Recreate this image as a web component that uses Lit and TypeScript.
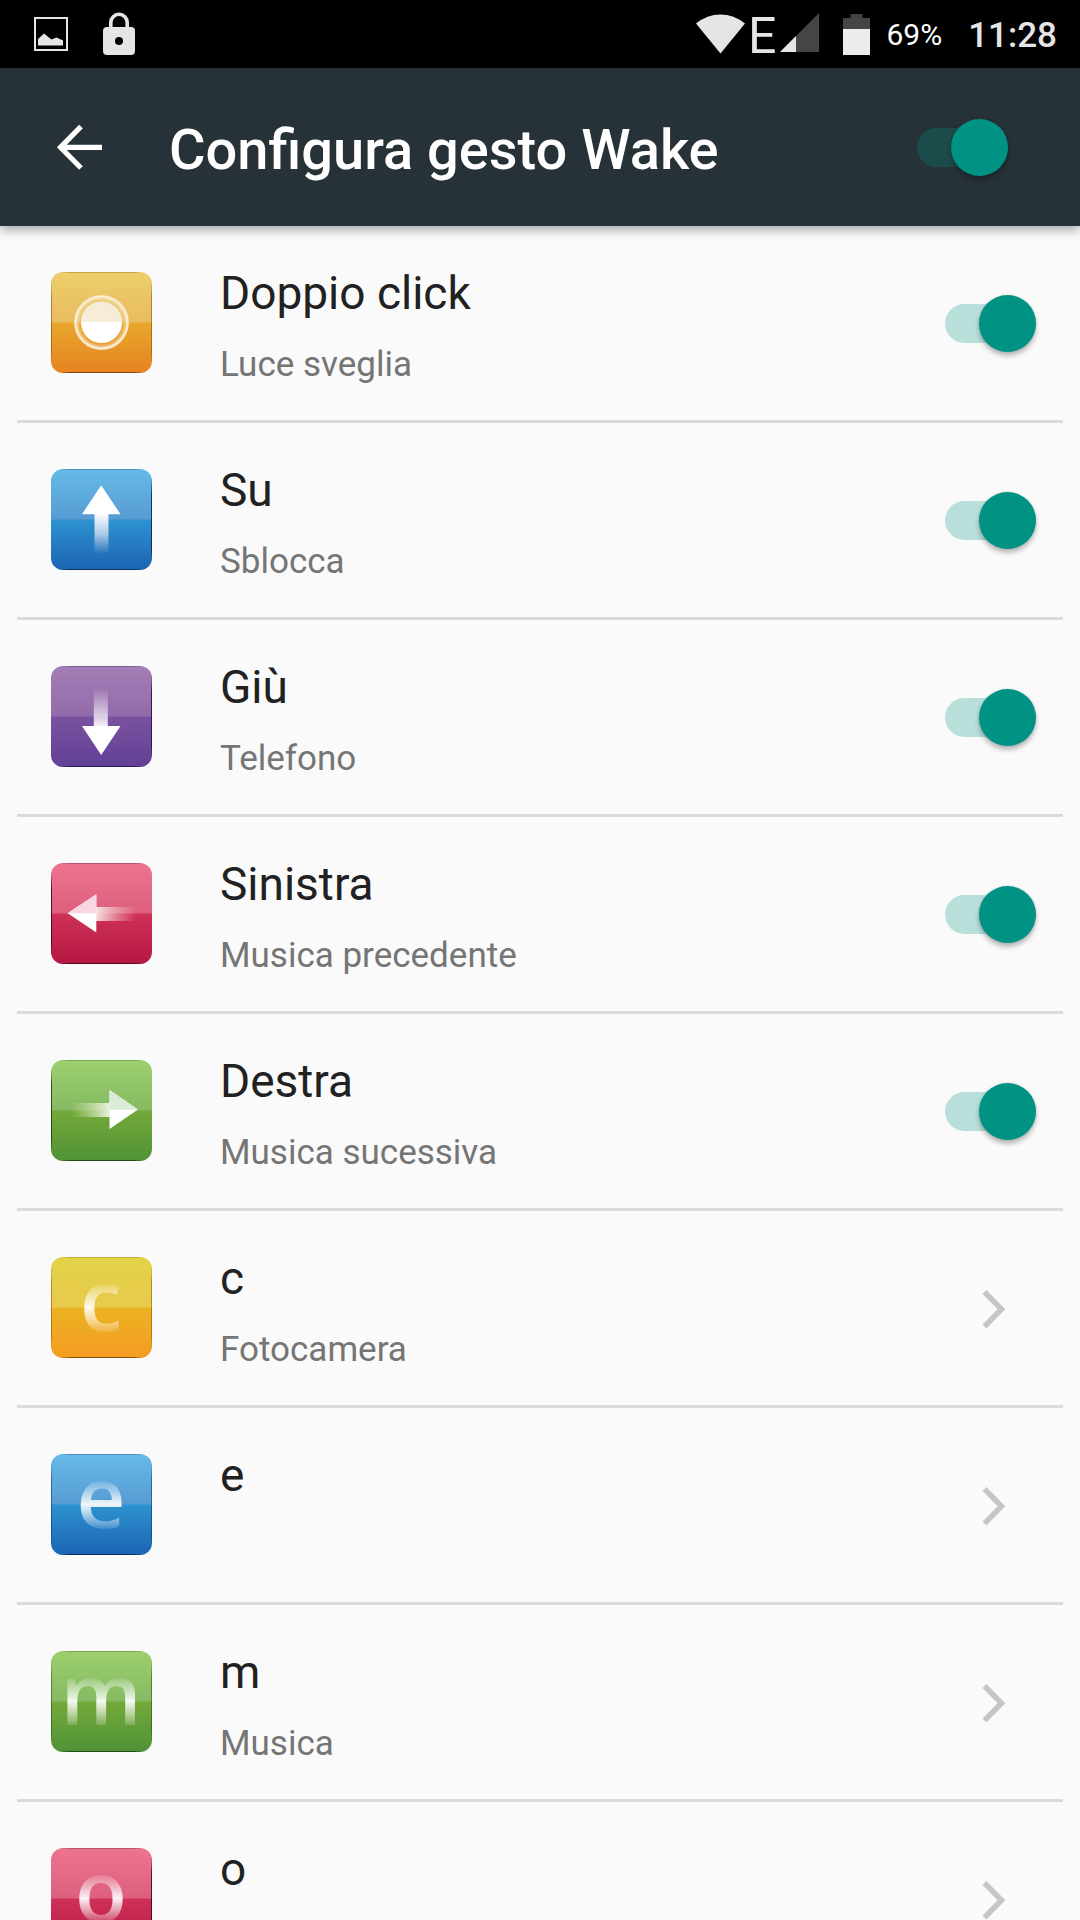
import { LitElement, html, svg, css, nothing } from "lit";
import { customElement, property } from "lit/decorators.js";

type Tone = "orange" | "blue" | "purple" | "red" | "green" | "yellow";

interface Gesture {
  id: string;
  title: string;
  action: string;
  tone: Tone;
  symbol: string;
  kind: "toggle" | "link";
  edge: "left" | "right" | "both";
}

/* upper start, upper end, lower start, lower end, edge line */
const TONES: Record<Tone, string[]> = {
  orange: ["#eccf6a", "#e9bb5f", "#e8a72d", "#e68320", "#6b3f08"],
  blue: ["#66bae8", "#569bd3", "#2e93d0", "#1b63b2", "#08284c"],
  purple: ["#a37eb6", "#926aa9", "#7952a0", "#614096", "#25124a"],
  red: ["#ed748f", "#dc607e", "#cf3157", "#b31743", "#4a0519"],
  green: ["#9dcf6e", "#85ba62", "#74a93a", "#4f9236", "#1d4212"],
  yellow: ["#e2d348", "#e9c94b", "#ebb323", "#f49c22", "#7a4806"],
};

const GESTURES: Gesture[] = [
  { id: "double", title: "Doppio click", action: "Luce sveglia", tone: "orange", symbol: "tap", kind: "toggle", edge: "both" },
  { id: "up", title: "Su", action: "Sblocca", tone: "blue", symbol: "up", kind: "toggle", edge: "right" },
  { id: "down", title: "Giù", action: "Telefono", tone: "purple", symbol: "down", kind: "toggle", edge: "right" },
  { id: "left", title: "Sinistra", action: "Musica precedente", tone: "red", symbol: "left", kind: "toggle", edge: "left" },
  { id: "right", title: "Destra", action: "Musica sucessiva", tone: "green", symbol: "right", kind: "toggle", edge: "left" },
  { id: "c", title: "c", action: "Fotocamera", tone: "yellow", symbol: "c", kind: "link", edge: "both" },
  { id: "e", title: "e", action: "", tone: "blue", symbol: "e", kind: "link", edge: "both" },
  { id: "m", title: "m", action: "Musica", tone: "green", symbol: "m", kind: "link", edge: "both" },
  { id: "o", title: "o", action: "", tone: "red", symbol: "o", kind: "link", edge: "right" },
];

@customElement("gesture-icon")
export class GestureIcon extends LitElement {
  @property() tone: Tone = "blue";
  @property() symbol = "up";
  @property() edge = "both";

  static styles = css`
    :host { display: block; flex: none; }
    .tile { display: block; width: 101px; height: 101px; overflow: visible; }
    .letter { font-family: "Open Sans", "Noto Sans", sans-serif; font-size: 85px; font-weight: 600; }
  `;

  private drawSymbol() {
    switch (this.symbol) {
      case "tap":
        return svg`
          <circle cx="50.5" cy="50.5" r="27" fill="url(#halo)"/>
          <circle cx="50.5" cy="50.5" r="26" fill="none" stroke="url(#ring)" stroke-width="3"/>
          <circle cx="50.5" cy="50.5" r="20.5" fill="#fff"/>
          <path d="M30 50a20.500 20.500 0 0 1 41 0z" fill="#f6edd8"/>`;
      case "up":
        return svg`<rect x="43.500" y="44" width="14" height="41" fill="url(#fadeDown)"/>
          <path d="M50.200 16.300 69.500 45.200H31z" fill="#fff"/>`;
      case "down":
        return svg`<rect x="42.800" y="22" width="14" height="39" fill="url(#fadeUp)"/>
          <path d="M50.200 89 69.500 60H31z" fill="#fff"/>`;
      case "left":
        return svg`<rect x="45" y="44" width="40" height="14" fill="url(#fadeRight)"/>
          <path d="M16.700 50.200 45.300 31.300V69.600z" fill="#fff"/>
          <path d="M16.700 50.200 45.300 31.300V50.200z" fill="#f8d7e1"/>`;
      case "right":
        return svg`<rect x="20" y="43" width="39" height="14" fill="url(#fadeLeft)"/>
          <path d="M87 49.600 58.500 30V69z" fill="#fff"/>
          <path d="M87 49.800 58.500 30V49.800z" fill="#d9ecd6"/>`;
      default:
        return svg`<text class="letter" x="50" y="74" text-anchor="middle" fill="url(#sheen)">${this.symbol}</text>`;
    }
  }

  render() {
    const c = TONES[this.tone];
    const left = this.edge === "left" ? 0.9 : this.edge === "both" ? 0.5 : 0;
    const right = this.edge === "right" ? 0.9 : this.edge === "both" ? 0.5 : 0;
    return html`<svg class="tile" viewBox="0 0 101 101" aria-hidden="true">
      <defs>
        <linearGradient id="top" x1="0" y1="0" x2="0" y2="1"><stop offset="0" stop-color=${c[0]}/><stop offset="1" stop-color=${c[1]}/></linearGradient>
        <linearGradient id="low" x1="0" y1="0" x2="0" y2="1"><stop offset="0" stop-color=${c[2]}/><stop offset="1" stop-color=${c[3]}/></linearGradient>
        <linearGradient id="side" gradientUnits="userSpaceOnUse" x1="0" y1="9" x2="0" y2="92"><stop offset="0" stop-color=${c[4]} stop-opacity="0"/><stop offset=".2" stop-color=${c[4]}/><stop offset=".85" stop-color=${c[4]}/><stop offset="1" stop-color=${c[4]} stop-opacity="0"/></linearGradient>
        <linearGradient id="base" gradientUnits="userSpaceOnUse" x1="9" y1="0" x2="92" y2="0"><stop offset="0" stop-color=${c[4]} stop-opacity="0"/><stop offset=".12" stop-color=${c[4]}/><stop offset=".88" stop-color=${c[4]}/><stop offset="1" stop-color=${c[4]} stop-opacity="0"/></linearGradient>
        <linearGradient id="fadeDown" x1="0" y1="0" x2="0" y2="1"><stop offset="0" stop-color="#fff"/><stop offset=".5" stop-color="#dfe4f4" stop-opacity=".75"/><stop offset="1" stop-color="#c5cdea" stop-opacity="0"/></linearGradient>
        <linearGradient id="fadeUp" x1="0" y1="1" x2="0" y2="0"><stop offset="0" stop-color="#fff" stop-opacity=".95"/><stop offset="1" stop-color="#fff" stop-opacity="0"/></linearGradient>
        <linearGradient id="fadeRight" x1="0" y1="0" x2="1" y2="0"><stop offset="0" stop-color="#fbe6ea" stop-opacity=".95"/><stop offset="1" stop-color="#f3c6c0" stop-opacity="0"/></linearGradient>
        <linearGradient id="fadeLeft" x1="1" y1="0" x2="0" y2="0"><stop offset="0" stop-color="#eef5e6" stop-opacity=".95"/><stop offset="1" stop-color="#e0e6b0" stop-opacity="0"/></linearGradient>
        <linearGradient id="sheen" gradientUnits="userSpaceOnUse" x1="0" y1="25" x2="0" y2="76"><stop offset="0" stop-color="#fff" stop-opacity=".05"/><stop offset=".5" stop-color="#fff" stop-opacity=".92"/><stop offset="1" stop-color="#fff" stop-opacity=".1"/></linearGradient>
        <linearGradient id="ring" x1="0" y1="0" x2="0" y2="1"><stop offset="0" stop-color="#fff" stop-opacity=".3"/><stop offset="1" stop-color="#fff" stop-opacity=".55"/></linearGradient>
        <radialGradient id="halo"><stop offset=".76" stop-color="#fff" stop-opacity="0"/><stop offset="1" stop-color="#fff" stop-opacity=".65"/></radialGradient>
        <clipPath id="shape"><rect width="101" height="101" rx="12"/></clipPath>
      </defs>
      <g clip-path="url(#shape)">
        <rect width="101" height="51" fill="url(#top)"/>
        <rect y="50.500" width="101" height="51" fill="url(#low)"/>
        <rect width="1" height="101" fill="url(#side)" opacity=${left}/>
        <rect x="100" width="1" height="101" fill="url(#side)" opacity=${right}/>
        <rect y="100" width="101" height="1" fill="url(#base)" opacity=".9"/>
        <rect width="101" height="1" fill="url(#base)" opacity=".3"/>
      </g>
      ${this.drawSymbol()}
    </svg>`;
  }
}

@customElement("app-root")
export class AppRoot extends LitElement {
  static styles = css`
    :host {
      display: flex;
      flex-direction: column;
      height: 100vh;
      overflow: hidden;
      background: #fafafa;
      font-family: Roboto, "Noto Sans", sans-serif;
      color: #212121;
    }
    svg { display: block; flex: none; }
    .status {
      flex: none;
      display: flex;
      align-items: center;
      justify-content: space-between;
      height: 68px;
      padding: 0 23px 0 34px;
      box-sizing: border-box;
      background: #000;
      color: #e5e5e5;
    }
    .notices { display: flex; align-items: center; gap: 35px; }
    .system { display: flex; align-items: center; }
    .network { display: flex; align-items: center; gap: 4px; margin: 0 23px 0 2px; }
    .cell { padding-top: 4px; font-size: 50px; line-height: 60px; }
    .percent { margin: 0 26px 0 16px; padding-top: 2px; font-size: 30px; line-height: 36px; color: #fff; }
    .clock { padding-top: 3px; font-size: 35px; line-height: 44px; font-weight: 500; }
    .bar {
      flex: none;
      z-index: 1;
      display: flex;
      align-items: center;
      height: 158px;
      padding: 0 72px 0 56px;
      box-sizing: border-box;
      background: #263238;
      box-shadow: 0 4px 10px rgba(0, 0, 0, 0.32);
    }
    .back { flex: none; padding: 0; border: 0; background: none; color: #fff; cursor: pointer; }
    .heading { flex: 1; margin: 0 0 0 65px; padding-top: 6px; font-size: 56px; line-height: 68px; font-weight: 500; color: #fff; }
    .switch {
      appearance: none;
      flex: none;
      display: grid;
      align-items: center;
      width: 91px;
      height: 57px;
      margin: 0;
      cursor: pointer;
    }
    .switch::before {
      content: "";
      grid-area: 1 / 1;
      height: 39px;
      border-radius: 20px;
      background: rgba(0, 147, 132, 0.26);
    }
    .switch::after {
      content: "";
      grid-area: 1 / 1;
      justify-self: start;
      width: 57px;
      height: 57px;
      border-radius: 50%;
      background: #b0b0b0;
      box-shadow: 0 4px 5px rgba(0, 0, 0, 0.26), 0 0 3px rgba(0, 0, 0, 0.12);
    }
    .switch:checked::after { justify-self: end; background: #009384; }
    .list { flex: 1; min-height: 0; margin: 0; padding: 0 17px; list-style: none; overflow-y: auto; scrollbar-width: none; }
    .item { border-bottom: 3px solid #dadada; }
    .row {
      display: flex;
      align-items: center;
      height: 194px;
      padding: 0 27px 0 34px;
      box-sizing: border-box;
      color: inherit;
      text-decoration: none;
      cursor: pointer;
    }
    .tile { margin-bottom: 1px; }
    .texts { flex: 1; align-self: flex-start; display: flex; flex-direction: column; gap: 12px; padding: 35px 0 0 68px; }
    .title { font-size: 46px; line-height: 64px; }
    .action { font-size: 35px; line-height: 56px; color: #757575; }
    .chevron { margin-right: 30px; }
  `;

  private renderRow(g: Gesture) {
    const body = html`
      <gesture-icon class="tile" tone=${g.tone} symbol=${g.symbol} edge=${g.edge}></gesture-icon>
      <span class="texts">
        <span class="title">${g.title}</span>
        ${g.action ? html`<span class="action">${g.action}</span>` : nothing}
      </span>`;
    return html`<li class="item">
      ${g.kind === "toggle"
        ? html`<label class="row" for=${g.id}>${body}<input class="switch" id=${g.id} type="checkbox" role="switch" checked /></label>`
        : html`<a class="row" href="#${g.id}">${body}
            <svg class="chevron" width="24" height="40" viewBox="0 0 24 40" aria-hidden="true"><path d="M2.500 4 19.500 21.300 2.500 38.500" fill="none" stroke="#c6c6c6" stroke-width="5.500"/></svg></a>`}
    </li>`;
  }

  render() {
    return html`
      <div class="status">
        <div class="notices">
          <svg width="34" height="34" viewBox="0 0 34 34" aria-hidden="true">
            <rect x="1" y="1" width="32" height="32" fill="none" stroke="#e5e5e5" stroke-width="2"/>
            <path d="M4 28.500V22l6-5.500 7.500 6 5-2 6.500 3v5z" fill="#e5e5e5"/>
          </svg>
          <svg width="32" height="44" viewBox="0 0 32 44" aria-hidden="true">
            <path d="M7.800 16V10.500a8.200 8.200 0 0 1 16.400 0V16" fill="none" stroke="#e5e5e5" stroke-width="3.600"/>
            <path fill-rule="evenodd" d="M4 15h24a4 4 0 0 1 4 4v20a4 4 0 0 1-4 4H4a4 4 0 0 1-4-4V19a4 4 0 0 1 4-4zM16 25a4 4 0 1 0 0 8 4 4 0 0 0 0-8z" fill="#e5e5e5"/>
          </svg>
        </div>
        <div class="system">
          <svg width="50" height="40" viewBox="0 0 50 40" aria-hidden="true"><path d="M0 9.500Q11 .5 24.500 .5T49 9.500L24.500 39.500z" fill="#e5e5e5"/></svg>
          <div class="network">
            <span class="cell">E</span>
            <svg width="40" height="44" viewBox="0 0 40 44" aria-hidden="true"><path d="M39 1v39H0z" fill="#454545"/><path d="M16 24v16H0z" fill="#e5e5e5"/></svg>
          </div>
          <svg width="27" height="41" viewBox="0 0 27 41" aria-hidden="true"><path d="M7.500 0h12v4H27v11H0V4h7.500z" fill="#454545"/><path d="M0 15h27v26H0z" fill="#ececec"/></svg>
          <span class="percent">69%</span>
          <span class="clock">11:28</span>
        </div>
      </div>
      <header class="bar">
        <button class="back" type="button" aria-label="Indietro">
          <svg width="48" height="48" viewBox="0 0 48 48" aria-hidden="true"><path d="M25 3.500 4.500 24.300 25 45M5 24.300H46" fill="none" stroke="#fff" stroke-width="5.200"/></svg>
        </button>
        <h1 class="heading" id="heading">Configura gesto Wake</h1>
        <input class="switch" type="checkbox" role="switch" aria-labelledby="heading" checked />
      </header>
      <ul class="list">${GESTURES.map((g) => this.renderRow(g))}</ul>
    `;
  }
}
